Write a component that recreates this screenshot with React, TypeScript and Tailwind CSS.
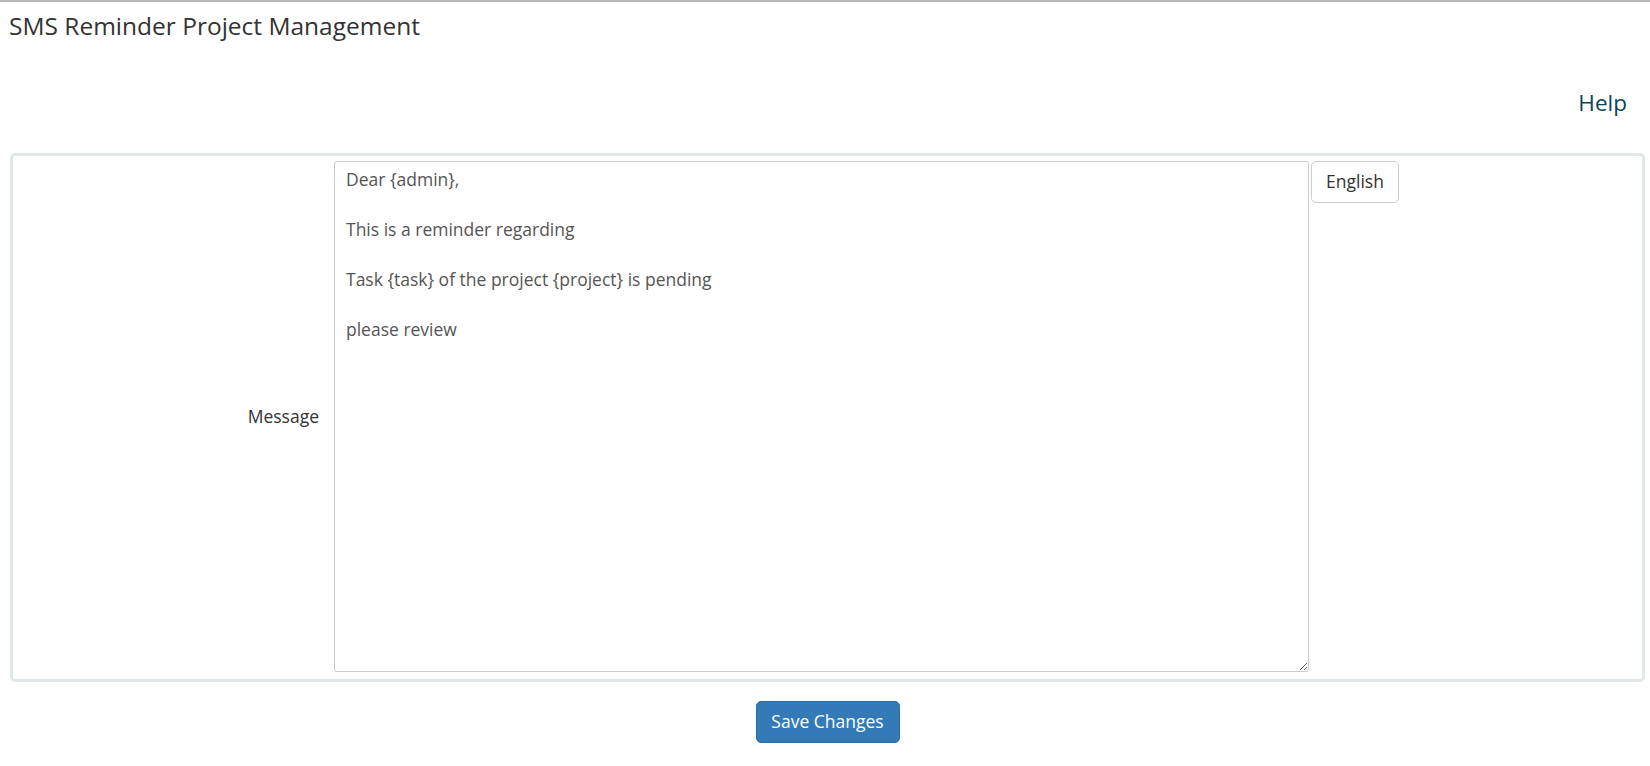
import { useState } from 'react';

const defaultMessage =
  'Dear {admin},\n\nThis is a reminder regarding\n\nTask {task} of the project {project} is pending\n\nplease review';

const App = () => {
  const [message, setMessage] = useState(defaultMessage);

  return (
    <div className="min-h-screen bg-white border-t-2 border-[#b8b8b8] font-['Open_Sans',sans-serif] text-[#333]">
      {/* Header */}
      <h1 className="pl-[9px] pt-[6px] text-[24.5px] leading-normal font-normal text-[#333]">
        SMS Reminder Project Management
      </h1>

      <div className="flex justify-end pr-[23px] pt-[41px]">
        <a href="#" className="text-[22.5px] leading-normal text-[#0b4656]">
          Help
        </a>
      </div>

      {/* Form panel */}
      <div className="ml-[10px] mr-[5px] mt-[33px]">
        <div className="flex border-[3px] border-[#e2e7e9] rounded-[5px] pt-[5px] pb-[7px]">
          <div className="w-[321px] shrink-0 flex items-center justify-end pr-[15px]">
            <label className="text-[17.5px] text-[#333]">Message</label>
          </div>
          <textarea
            value={message}
            onChange={(e) => setMessage(e.target.value)}
            className="w-[975px] h-[511px] shrink-0 border border-[#ccc] rounded-[3px] pl-[11px] pr-3 pt-[5px] text-[17.5px] leading-[25px] text-[#555] font-['Open_Sans',sans-serif] outline-none"
          />
          <div className="ml-[2px]">
            <button className="w-[88px] h-[42px] bg-white border border-[#ccc] rounded-[5px] text-[17.5px] text-[#333]">
              English
            </button>
          </div>
        </div>

        <div className="flex justify-center mt-[19px]">
          <button className="w-[144px] h-[42px] bg-[#337ab7] border border-[#2e6da4] rounded-[5px] text-[17.5px] text-white">
            Save Changes
          </button>
        </div>
      </div>
    </div>
  );
};

export default App;
